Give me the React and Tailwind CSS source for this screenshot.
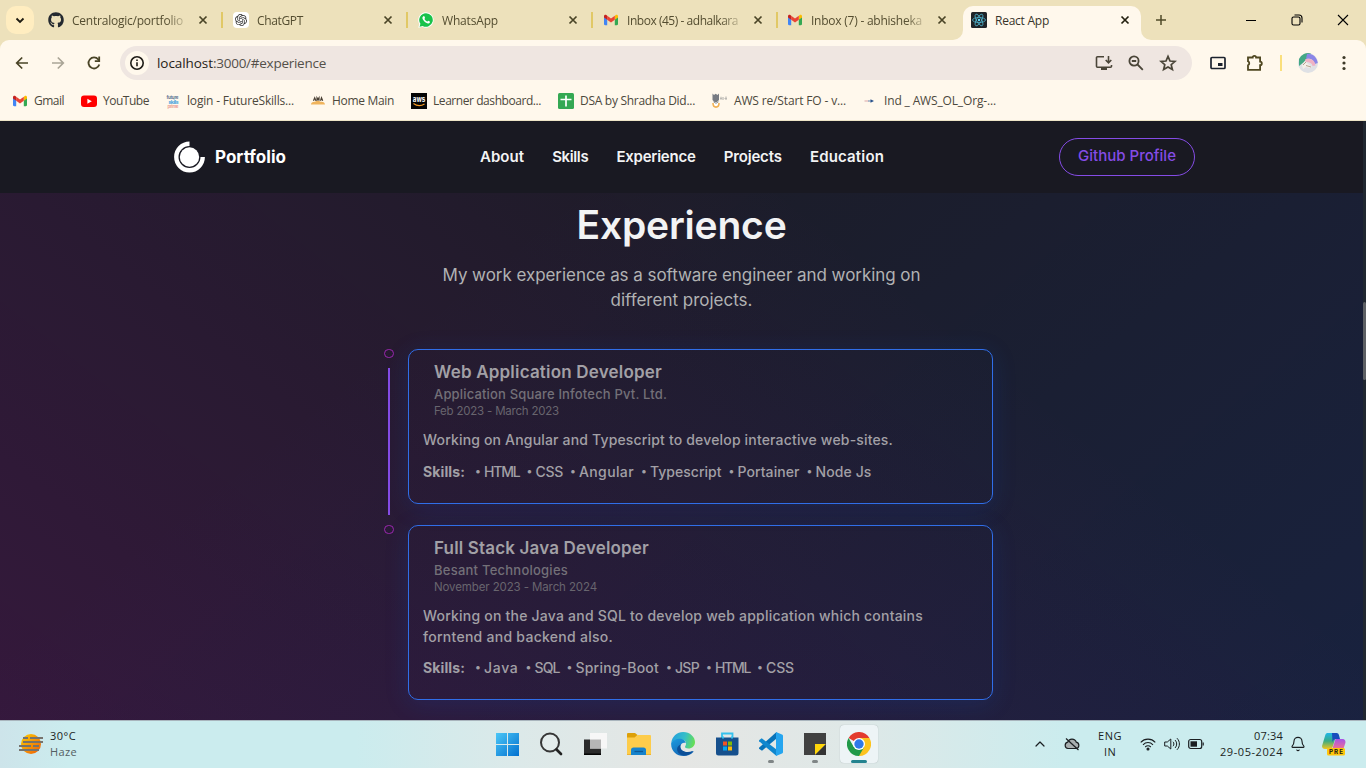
import { useLayoutEffect, useRef, useState } from "react";
import { FaGithub } from "react-icons/fa";
import { SiOpenai } from "react-icons/si";
import { Bell, ChevronUp } from "lucide-react";

const POPPINS = "font-['Inter',sans-serif]";
const SEGOE = "font-['Open_Sans','Noto_Sans',sans-serif]";

/* A run of text whose tracking is adjusted so that it spans a given width. */
function Fit({ w, className = "", children }) {
  const ref = useRef(null);
  const [tracking, setTracking] = useState(0);
  useLayoutEffect(() => {
    const natural = ref.current.getBoundingClientRect().width;
    setTracking((w - natural) / String(children).length);
  }, []);
  return (
    <span ref={ref} style={{ letterSpacing: tracking + "px" }} className={"inline-block whitespace-pre " + className}>
      {children}
    </span>
  );
}

function Gmail({ className }) {
  return (
    <svg viewBox="0 0 24 18" className={className}>
      <path d="M0 3v13c0 1 .8 2 2 2h3.500V8z" fill="#4285f4" />
      <path d="M24 3v13c0 1-.8 2-2 2h-3.500V8z" fill="#34a853" />
      <path d="M18.500 2v6.500L24 4.500V2.300C24 .2 21.600-.8 20 .4z" fill="#fbbc04" />
      <path d="M5.500 8.500V1.500L12 6.400l6.500-4.900v7L12 13.400z" fill="#ea4335" />
      <path d="M0 2.300v2.200l5.500 4V1.500L4 .4C2.400-.8 0 .2 0 2.300z" fill="#c5221f" />
    </svg>
  );
}

function ReactMark() {
  return (
    <svg viewBox="0 0 16 16" className="h-4 w-4 shrink-0">
      <rect width="16" height="16" rx="1.500" fill="#202428" />
      <g fill="none" stroke="#4fb3cb" strokeWidth="0.8">
        <ellipse cx="8" cy="8" rx="6.500" ry="2.500" />
        <ellipse cx="8" cy="8" rx="6.500" ry="2.500" transform="rotate(60 8 8)" />
        <ellipse cx="8" cy="8" rx="6.500" ry="2.500" transform="rotate(120 8 8)" />
      </g>
      <circle cx="8" cy="8" r="1.200" fill="#61dafb" />
    </svg>
  );
}

function Close({ dark }) {
  return (
    <svg viewBox="0 0 16 16" className="h-4 w-4 shrink-0" fill="none" stroke={dark ? "#23200f" : "#4a4426"} strokeWidth="1.700">
      <path d="M4.500 4.500l7 7M11.500 4.500l-7 7" />
    </svg>
  );
}

const tabs = [
  { title: "Centralogic/portfolio", w: 111, icon: <FaGithub className="h-4 w-4 shrink-0 text-[#24292f]" /> },
  {
    title: "ChatGPT",
    w: 46,
    icon: (
      <span className="flex h-4 w-4 shrink-0 items-center justify-center rounded-sm bg-white">
        <SiOpenai className="h-3 w-3 text-[#333]" />
      </span>
    ),
  },
  {
    title: "WhatsApp",
    w: 56,
    icon: (
      <svg viewBox="0 0 16 16" className="h-4 w-4 shrink-0">
        <path d="M8 .3a7.700 7.700 0 1 1-3.700 14.500L.3 15.700l1-3.800A7.700 7.700 0 0 1 8 .3z" fill="#fff" />
        <path d="M8 1.200a6.800 6.800 0 1 1-3.400 12.700l-3 .8.800-2.900A6.800 6.800 0 0 1 8 1.200z" fill="#19c24a" />
        <path d="M5.500 4.200c.5-.3.900 0 1.100.6l.4 1c.1.400-.6.900-.5 1.200.5 1.100 1.500 2 2.600 2.500.4.100.8-.9 1.200-.8l1.500.7c.4.300 0 1.500-.8 1.800-1.300.6-3.300-.4-4.600-1.700C5 8 4.100 6.500 4.500 5.300c.2-.5.500-.9 1-1.100z" fill="#fff" />
      </svg>
    ),
  },
  { title: "Inbox (45) - adhalkara", w: 111, icon: <Gmail className="h-4 w-4 shrink-0 px-px" /> },
  { title: "Inbox (7) - abhisheka", w: 111, icon: <Gmail className="h-4 w-4 shrink-0 px-px" /> },
];

function TabStrip() {
  return (
    <div className="flex h-10 items-center bg-[#ede1bb] pl-1.5">
      <div className="mr-1.5 flex h-7 w-7 shrink-0 items-center justify-center rounded-[10px] bg-[#ffedc0]">
        <svg viewBox="0 0 12 12" className="h-3 w-3" fill="none" stroke="#1e1b10" strokeWidth="1.800">
          <path d="M2.500 4.500L6 8l3.500-3.500" />
        </svg>
      </div>
      {tabs.map((t, i) => (
        <div key={t.title} className={"flex h-10 shrink-0 items-center pl-2 " + (i < 3 ? "w-[185px]" : "w-[184px]")}>
          {t.icon}
          <div className="ml-2 w-28 overflow-hidden pt-px text-[12px] leading-5 text-[#544d30] [mask-image:linear-gradient(90deg,#000_84%,rgba(0,0,0,0.25))]">
            <Fit w={t.w}>{t.title}</Fit>
          </div>
          <div className="ml-[11px] flex">
            <Close />
          </div>
          {i < 4 && <div className="ml-2.5 h-4 w-0.5 bg-[#e1c865]" />}
        </div>
      ))}
      <div className="relative flex h-[34px] w-[178px] shrink-0 items-center self-end rounded-t-[10px] bg-[#fff8ec] px-2 pb-[6px]">
        <div className="absolute -left-2.5 bottom-0 h-2.5 w-2.5 bg-[#fff8ec]">
          <div className="h-full w-full rounded-br-[10px] bg-[#ede1bb]" />
        </div>
        <div className="absolute -right-2.5 bottom-0 h-2.5 w-2.5 bg-[#fff8ec]">
          <div className="h-full w-full rounded-bl-[10px] bg-[#ede1bb]" />
        </div>
        <ReactMark />
        <div className="ml-2 flex-1 pt-px text-[12px] leading-5 text-[#38342a]">
          <Fit w={54}>React App</Fit>
        </div>
        <Close dark />
      </div>
      <svg viewBox="0 0 12 12" className="ml-3.5 h-3 w-3" fill="none" stroke="#4f4929" strokeWidth="1.500">
        <path d="M6 1v10M1 6h10" />
      </svg>
      <div className="ml-auto flex items-center gap-[34px] pr-[17px] text-black">
        <svg viewBox="0 0 12 12" className="h-3 w-3" fill="none" stroke="currentColor"><path d="M1 6.500h10" /></svg>
        <svg viewBox="0 0 12 12" className="h-3 w-3" fill="none" stroke="currentColor" strokeWidth="1.100">
          <rect x="1" y="3" width="8" height="8" rx="1.500" />
          <path d="M3.500 1h4.500a3 3 0 0 1 3 3v4.500" />
        </svg>
        <svg viewBox="0 0 12 12" className="h-3 w-3" fill="none" stroke="currentColor" strokeWidth="1.100"><path d="M1 1l10 10M11 1L1 11" /></svg>
      </div>
    </div>
  );
}

function AddressBar() {
  return (
    <div className="bg-[#ede1bb]">
      <div className="flex h-[46px] items-center rounded-t-[9px] bg-[#fff8ec] pl-[14px]">
        <svg viewBox="0 0 16 16" className="h-4 w-4" fill="none" stroke="#4a4426" strokeWidth="1.700">
          <path d="M14 8H3M8.200 2.500L2.700 8l5.500 5.500" />
        </svg>
        <svg viewBox="0 0 16 16" className="ml-5 h-4 w-4" fill="none" stroke="#aaa596" strokeWidth="1.700">
          <path d="M2 8h11M7.800 2.500L13.300 8l-5.500 5.500" />
        </svg>
        <svg viewBox="0 0 16 16" className="ml-5 h-4 w-4" fill="none" stroke="#4a4426" strokeWidth="1.800">
          <path d="M13.300 9.500A5.500 5.500 0 1 1 12.300 4.500l1 1.200" />
          <path d="M13.200 1.500v4.600H8.800" />
        </svg>
        <div className="ml-[18px] flex h-[34px] w-[1072px] shrink-0 items-center rounded-full bg-[#efe6e1] pl-[5px] pr-[15px]">
          <div className="flex h-6 w-6 items-center justify-center rounded-full bg-[#fff8ec]">
            <svg viewBox="0 0 16 16" className="h-4 w-4" fill="none" stroke="#1e1b16" strokeWidth="1.600">
              <circle cx="8" cy="8" r="6.200" />
              <path d="M8 7.200v4M8 4.500v1.600" />
            </svg>
          </div>
          <div className="ml-2 flex-1 text-[13.500px] leading-5 text-[#54504a]">
            <Fit w={56} className="text-[#1f1c17]">localhost</Fit>
            <Fit w={113}>:3000/#experience</Fit>
          </div>
          <div className="flex items-center gap-3.5 text-[#4a4538]">
            <svg viewBox="0 0 18 18" className="h-[18px] w-[18px]" fill="none" stroke="currentColor" strokeWidth="1.600">
              <path d="M9 2.800H2.500a1 1 0 0 0-1 1v8.400a1 1 0 0 0 1 1h13a1 1 0 0 0 1-1V11M13.500 2v6.500M10.700 6l2.800 2.800L16.300 6" />
              <path d="M6 14.800h6" strokeWidth="2.400" />
            </svg>
            <svg viewBox="0 0 18 18" className="h-[18px] w-[18px]" fill="none" stroke="currentColor" strokeWidth="1.800">
              <circle cx="7" cy="7" r="4.600" />
              <path d="M10.500 10.500l5.300 5.300M4.800 7h4.400" />
            </svg>
            <svg viewBox="0 0 18 18" className="h-[18px] w-[18px]" fill="none" stroke="currentColor" strokeWidth="1.700">
              <path d="M9 2.300l2 4.700 5 .4-3.800 3.300 1.200 4.900L9 13l-4.400 2.600 1.200-4.900L2 7.400l5-.4z" />
            </svg>
          </div>
        </div>
        <svg viewBox="0 0 16 14" className="ml-[18px] h-[14px] w-4" fill="none" stroke="#1c222e" strokeWidth="1.700">
          <rect x="1" y="1.500" width="14" height="11" rx="1" />
          <rect x="8" y="7" width="4.500" height="3" fill="#1c222e" stroke="none" />
        </svg>
        <svg viewBox="0 0 18 18" className="ml-5 h-[18px] w-[18px]" fill="none" stroke="#4f4721" strokeWidth="1.800">
          <path d="M2 3.500h4.700a1.700 1.700 0 0 1 3.400 0h4v4.200a1.700 1.700 0 0 1 0 3.400v4.700H2v-4.500a2.200 2.200 0 0 0 0-4z" />
        </svg>
        <div className="ml-4 h-4 w-0.5 bg-[#fadf7c]" />
        <svg viewBox="0 0 20 20" className="ml-4 h-5 w-5">
          <circle cx="10" cy="10" r="10" fill="#dfe1e5" />
          <path d="M1 6A10 10 0 0 1 13 .5L6 9l-5 4z" fill="#43a884" />
          <path d="M9 1C14 0 19 4 19.800 10l-3 1C16 7 13 5 8 6z" fill="#8b86e6" />
          <path d="M7 6.500c5-2 10 1 10.500 6l-3 .5c-.5-3-3-4-7-4z" fill="#efb2c4" />
          <path d="M4 12l3-4 3 3 4 3-3 1-3-1-3 2z" fill="#f4efe9" />
          <path d="M5 12l3-3M8 12.500l5 1.500" fill="none" stroke="#af9a84" strokeWidth="0.900" />
        </svg>
        <svg viewBox="0 0 4 16" className="ml-6 h-4 w-1" fill="#3d3927">
          <circle cx="2" cy="2.500" r="1.600" /><circle cx="2" cy="8" r="1.600" /><circle cx="2" cy="13.500" r="1.600" />
        </svg>
      </div>
    </div>
  );
}

function Tiny({ kind }) {
  if (kind === "youtube")
    return (
      <svg viewBox="0 0 16 16" className="h-4 w-4">
        <rect y="2.500" width="16" height="11.500" rx="3" fill="#f00" />
        <path d="M6.400 5.700v5L10.800 8.200z" fill="#fff" />
      </svg>
    );
  if (kind === "future")
    return (
      <svg viewBox="0 0 16 16" className="h-4 w-4 font-['Inter',sans-serif] font-bold">
        <text x="1.500" y="5.500" fontSize="4.500" textLength="12" fill="#5d7290">future</text>
        <text x="3.500" y="10.500" fontSize="5" textLength="10" fill="#3ea2dd">skills</text>
        <text x="2.500" y="15" fontSize="4.500" textLength="11" fill="#e99d93">prime</text>
      </svg>
    );
  if (kind === "home")
    return (
      <svg viewBox="0 0 16 16" className="h-4 w-4">
        <path d="M1 11.500c0-2 2-3 4-2.700 1.500-1.500 4-1.500 5.500 0C13 8.300 15 9.500 15 11.500z" fill="#f0b45c" />
        <path d="M3.500 7.800l1.200-3 1.200 3M7 7.800v-3l1 1.500 1-1.500v3M10.500 7.800l1-3 1.200 3" fill="none" stroke="#4b4135" strokeWidth="1.200" />
      </svg>
    );
  if (kind === "aws")
    return (
      <svg viewBox="0 0 16 16" className="h-4 w-4 font-['Inter',sans-serif] font-bold">
        <rect width="16" height="16" fill="#050505" />
        <text x="1.800" y="8.600" fontSize="7.500" textLength="12.500" lengthAdjust="spacingAndGlyphs" fill="#fff">aws</text>
        <path d="M2.500 10.500c3.500 2.500 8 2.300 11 .4" fill="none" stroke="#f79b23" strokeWidth="1.200" />
      </svg>
    );
  if (kind === "sheet")
    return (
      <svg viewBox="0 0 16 16" className="h-4 w-4">
        <rect width="16" height="16" rx="1.500" fill="#34a853" />
        <path d="M8 2.500v11M2.500 6.500h11" stroke="#fff" strokeWidth="1.700" />
      </svg>
    );
  if (kind === "canvas")
    return (
      <svg viewBox="0 0 16 16" className="h-4 w-4">
        <path d="M.5.5L2 2l1.700-1.300L5.500 2 7 .5v6.500L5 9H2.500L.5 7z" fill="#777b82" />
        <path d="M8 5.500h2M11 4v3M12.500 5.500H15M9 3.800v3M14 3.500v3.500" stroke="#bbb9b4" strokeWidth="1.200" />
        <path d="M1 10c0 5.500 6 5.500 6 0" fill="#fff" stroke="#f1b155" strokeWidth="1.600" />
        <path d="M1.500 8.800l2.500 1.500 2.500-1.500" stroke="#87929d" fill="none" />
      </svg>
    );
  if (kind === "arrow")
    return (
      <svg viewBox="0 0 16 16" className="h-4 w-4">
        <path d="M2.500 8h4" stroke="#d8a6a9" /><path d="M6 8h4" stroke="#668cb5" /><path d="M8.500 6.200L12 8 8.500 9.800z" fill="#28518b" />
      </svg>
    );
  return <Gmail className="h-4 w-4 px-px" />;
}

const bookmarks = [
  ["gmail", "Gmail", 30, "ml-3"],
  ["youtube", "YouTube", 46, "ml-[17px]"],
  ["future", "login - FutureSkills...", 107, "ml-4"],
  ["home", "Home Main", 62, "ml-4"],
  ["aws", "Learner dashboard...", 108, "ml-[17px]"],
  ["sheet", "DSA by Shradha Did...", 115, "ml-[17px]"],
  ["canvas", "AWS re/Start FO - v...", 112, "ml-[17px]"],
  ["arrow", "Ind _ AWS_OL_Org-...", 112, "ml-4"],
];

function Bookmarks() {
  return (
    <div className="flex h-[34px] items-center bg-[#fff8ec] pt-px pb-1.5 text-[12px] leading-4 text-[#4c483c]">
      {bookmarks.map(([k, label, w, ml]) => (
        <div key={k} className={"flex items-center gap-1.5 " + ml}>
          <Tiny kind={k} />
          <Fit w={w}>{label}</Fit>
        </div>
      ))}
    </div>
  );
}

function Nav() {
  return (
    <nav className="flex h-[72px] items-center bg-[#191922] pl-[174px] text-white">
      <svg viewBox="0 0 32 32" className="h-8 w-8">
        <circle cx="15.500" cy="16" r="9.700" fill="#fff" />
        <path d="M15.500 2.800A13.200 13.200 0 1 0 28.700 16" fill="none" stroke="#fff" strokeWidth="4.400" />
      </svg>
      <Fit w={71} className="ml-[9px] text-[17px] font-bold leading-6">Portfolio</Fit>
      <div className="ml-[194px] flex w-[404px] justify-between text-[15px] font-semibold leading-6 text-[#f2f3f4]">
        <Fit w={44}>About</Fit>
        <Fit w={36}>Skills</Fit>
        <Fit w={79}>Experience</Fit>
        <Fit w={58}>Projects</Fit>
        <Fit w={74}>Education</Fit>
      </div>
      <div className="ml-[175px] flex h-[38px] w-[136px] items-center justify-center rounded-[20px] border border-[#854ce6] pb-0.5 text-[15px] font-medium leading-6 text-[#854ce6]">
        <Fit w={98}>Github Profile</Fit>
      </div>
    </nav>
  );
}

const jobs = [
  {
    role: ["Web Application Developer", 228],
    company: ["Application Square Infotech Pvt. Ltd.", 233],
    date: ["Feb 2023 - March 2023", 125],
    desc: [["Working on Angular and Typescript to develop interactive web-sites.", 470]],
    skills: [["HTML", 35.5], ["CSS", 27.5], ["Angular", 55], ["Typescript", 71.5], ["Portainer", 62], ["Node Js", 56]],
  },
  {
    role: ["Full Stack Java Developer", 215],
    company: ["Besant Technologies", 134],
    date: ["November 2023 - March 2024", 163],
    desc: [
      ["Working on the Java and SQL to develop web application which contains", 500],
      ["forntend and backend also.", 190],
    ],
    skills: [["Java", 34.5], ["SQL", 25], ["Spring-Boot", 83.5], ["JSP", 24], ["HTML", 35], ["CSS", 28]],
  },
];

function Job({ job, last }) {
  return (
    <div className="flex items-start">
      <div className="flex w-6 shrink-0 flex-col items-start">
        <div className="h-[9px] w-[10px] rounded-full border border-[#9c27b0]" />
        {!last && <div className="ml-1 mt-2.5 h-[147px] w-0.5 bg-[#854ce6]" />}
      </div>
      <div className={"w-[585px] rounded-[10px] border border-[#306ee8] pl-[14px] text-[#a2a0a6] shadow-[0_4px_24px_rgba(23,92,230,0.15)] " + (last ? "h-[175px]" : "h-[155px]")}>
        <div className="flex flex-col items-start pl-[11px] pt-[10px]">
          <Fit w={job.role[1]} className="text-[17px] font-semibold leading-6">{job.role[0]}</Fit>
          <Fit w={job.company[1]} className="text-[13px] font-medium leading-5 text-[#737078]">{job.company[0]}</Fit>
          <Fit w={job.date[1]} className="-mt-px text-[11.500px] leading-4 text-[#68656e]">{job.date[0]}</Fit>
        </div>
        <div className="mt-[10px] flex flex-col items-start text-[14px] font-medium leading-[21px]">
          {job.desc.map(([t, w]) => <Fit key={t} w={w}>{t}</Fit>)}
        </div>
        <div className={"flex text-[14px] font-medium leading-[21px] " + (last ? "mt-[10px]" : "mt-[11px]")}>
          <Fit w={42} className="mr-2.5 font-bold">Skills:</Fit>
          <div className="flex gap-[7px]">
            {job.skills.map(([t, w]) => (
              <div key={t} className="flex">
                <span className="w-[9px] text-[11px]">•</span>
                <Fit w={w}>{t}</Fit>
              </div>
            ))}
          </div>
        </div>
      </div>
    </div>
  );
}

function Page() {
  return (
    <div className={"flex h-[599px] " + POPPINS}>
      <div className="flex w-[1363px] flex-col bg-[#1c1c27] bg-[linear-gradient(38.73deg,rgba(204,0,187,0.15)_0%,rgba(201,32,184,0)_50%),linear-gradient(141.27deg,rgba(0,70,209,0)_50%,rgba(0,70,209,0.15)_100%)] bg-[length:1363px_1400px] bg-[position:0_-721px]">
        <Nav />
        <div className="flex flex-col items-center pt-2">
          <h2 className="text-[39px] font-semibold leading-[48px] text-[#f2f3f4]"><Fit w={210}>Experience</Fit></h2>
          <div className="mt-[14px] flex flex-col items-center text-[17px] leading-[25px] text-[#b1b2b3]">
            <Fit w={478}>My work experience as a software engineer and working on</Fit>
            <Fit w={142}>different projects.</Fit>
          </div>
        </div>
        <div className="mt-9 flex flex-col gap-2.5 pl-[384px]">
          <Job job={jobs[0]} />
          <Job job={jobs[1]} last />
        </div>
      </div>
      <div className="w-[3px] bg-[#202730] pt-[181px]">
        <div className="h-[78px] rounded-sm bg-[#5d6064]" />
      </div>
    </div>
  );
}

function TaskIcon({ children }) {
  return <svg viewBox="0 0 24 24" className="h-6 w-6">{children}</svg>;
}

function Taskbar() {
  return (
    <div className="flex h-12 items-center border-t border-[#a9b5bd] bg-[linear-gradient(90deg,#cde4ea_0%,#cbecee_5%,#cbecee_26%,#dce9e9_38%,#e5e6e4_50%,#dfe8e7_62%,#cbecee_78%,#cbecee_100%)] text-[11px] leading-4 text-[#1b1f22]">
      <div className="flex w-[488px] items-center pb-0.5 pl-[19px]">
        <svg viewBox="0 0 24 24" className="h-6 w-6">
          <defs><linearGradient id="sun" x1="0" y1="0" x2="1" y2="1"><stop stopColor="#ffd000" /><stop offset="1" stopColor="#ee5a08" /></linearGradient></defs>
          <circle cx="12" cy="12" r="10" fill="url(#sun)" />
          <path d="M4 6h5M11 6h13M4 10h20M0 14h12M14 14h6M0 18h20" stroke="#77736d" strokeWidth="2" />
        </svg>
        <div className="ml-[7px] flex flex-col items-start">
          <Fit w={26}>30°C</Fit>
          <Fit w={27} className="text-[#545e62]">Haze</Fit>
        </div>
      </div>
      <div className="flex items-center gap-1.5 pb-0.5">
        <div className="flex h-[38px] w-[38px] items-center justify-center">
          <TaskIcon>
            <defs><linearGradient id="win" x1="0" y1="0" x2="1" y2="1"><stop stopColor="#4cc7f7" /><stop offset="1" stopColor="#0270cf" /></linearGradient></defs>
            <path d="M1 1h11v11H1zM13 1h11v11H13zM1 13h11v11H1zM13 13h11v11H13z" fill="url(#win)" />
          </TaskIcon>
        </div>
        <div className="flex h-[38px] w-[38px] items-center justify-center">
          <TaskIcon>
            <circle cx="11" cy="10.500" r="9" fill="rgba(255,255,255,.2)" stroke="#363636" strokeWidth="2" />
            <path d="M17.500 17.500l4.500 4.500" stroke="#222" strokeWidth="2.700" strokeLinecap="round" />
          </TaskIcon>
        </div>
        <div className="flex h-[38px] w-[38px] items-center justify-center">
          <TaskIcon>
            <path d="M1 7.500h17V23H1z" fill="#2b2b2b" /><path d="M1 21.500h17V23H1z" fill="#050505" />
            <path d="M7 1h17v15.500H7z" fill="#f7f7f7" /><path d="M7 7.500h11v9H7z" fill="#b6b6b6" />
          </TaskIcon>
        </div>
        <div className="flex h-[38px] w-[38px] items-center justify-center">
          <TaskIcon>
            <path d="M0 2a1 1 0 0 1 1-1h7l2.500 2-2.500 3H0z" fill="#dda009" />
            <path d="M0 5.500h7.500L10.500 3H23a1 1 0 0 1 1 1v18a1 1 0 0 1-1 1H1a1 1 0 0 1-1-1z" fill="#fdcc4b" />
            <path d="M4 23v-5a2.500 2.500 0 0 1 2.500-2.500h10A2.500 2.500 0 0 1 19 18v5z" fill="#1683cc" /><path d="M7.500 19.500h8.500" stroke="#0d5896" strokeWidth="1.300" />
            <path d="M0 22.500h4m15 0h5" stroke="#edb332" />
          </TaskIcon>
        </div>
        <div className="flex h-[38px] w-[38px] items-center justify-center">
          <TaskIcon>
            <defs>
              <linearGradient id="edgeA" x1="0" x2="1" y1="0.300" y2="0.500"><stop stopColor="#249fde" /><stop offset="0.550" stopColor="#35bec8" /><stop offset="1" stopColor="#67df54" /></linearGradient>
              <linearGradient id="edgeB" x1="0" x2="0.600" y1="0" y2="1"><stop stopColor="#1b9be0" /><stop offset="1" stopColor="#1163b3" /></linearGradient>
            </defs>
            <path d="M.2 11C1 4.500 6 0 12.200 0 19 0 24 5 24 10c0 4-3 6.500-6.500 6.500-3 0-4-1.300-3.300-2.300 2.300-3.500-.3-6.700-4-6.700C5.500 7.500 2 9 .2 11z" fill="url(#edgeA)" />
            <path d="M.2 11C1.600 8.500 5 6.700 8.700 6.700c3.300 0 5.800 1.800 6 4.500-1.500-1-4.500-.5-5.200 2.600-.9 4.700 5.800 8.700 12 5.400.8-.4 1.200.2.800.7C20 22.500 16.300 24 12.500 24 5.500 24-.5 18.500.2 11z" fill="url(#edgeB)" />
            <path d="M9.800 12.500c-2.500 4.800 3.500 9.500 12 6.500-3 4.500-9.500 5.700-13 3-4-3-3.500-8 1-9.500z" fill="#0c4f98" />
          </TaskIcon>
        </div>
        <div className="flex h-[38px] w-[38px] items-center justify-center">
          <TaskIcon>
            <path d="M7 6V1.500h10.500V6" fill="none" stroke="#35c1ed" strokeWidth="1.800" />
            <path d="M1 5.500h22.500V21a2.500 2.500 0 0 1-2.500 2.500H3.500A2.500 2.500 0 0 1 1 21z" fill="#16508d" />
            <path d="M7 5.500h2M16 5.500h2" stroke="#35c1ed" strokeWidth="2" />
            <path d="M8 9.500h4v4H8z" fill="#f35325" /><path d="M13 9.500h4v4h-4z" fill="#81bc06" /><path d="M8 14.500h4v4H8z" fill="#05a6f0" /><path d="M13 14.500h4v4h-4z" fill="#ffba08" />
          </TaskIcon>
        </div>
        <div className="relative flex h-[38px] w-[38px] items-center justify-center">
          <TaskIcon>
            <path d="M17.500 0v6.500L3 18.800 0 16.700v-1L17.500 0z" fill="#0873b9" />
            <path d="M0 8.300l2.700-2L17.500 17.500V24L.2 9.300z" fill="#1087ce" />
            <path d="M17 0l6 2.500a1.500 1.500 0 0 1 1 1.500v16a1.500 1.500 0 0 1-1 1.500L17 24z" fill="#25a5ef" />
          </TaskIcon>
          <div className="absolute bottom-0 left-4 h-[3px] w-1.5 rounded-full bg-[#7f8586]" />
        </div>
        <div className="relative flex h-[38px] w-[38px] items-center justify-center">
          <TaskIcon>
            <path d="M1 1h22v11L12 23H1z" fill="#414141" /><path d="M12 23V12h11z" fill="#ffd60a" /><path d="M23 12v11H12z" fill="#333" />
          </TaskIcon>
          <div className="absolute bottom-0 left-4 h-[3px] w-1.5 rounded-full bg-[#7f8586]" />
        </div>
        <div className="relative flex h-[38px] w-[38px] items-center justify-center rounded bg-[#edf4f6] shadow-[0_0_1px_#9aa7aa]">
          <TaskIcon>
            <path d="M12 12L1.600 6A12 12 0 0 1 22.400 6z" fill="#e33b2e" />
            <path d="M12 12V6h10.400A12 12 0 0 1 12 24l-1-.1 6-9.500z" fill="#fcc31e" />
            <path d="M1.600 6A12 12 0 0 0 12 24l5.200-9H12L6.800 15z" fill="#219a49" />
            <circle cx="12" cy="12" r="6" fill="#fff" /><circle cx="12" cy="12" r="4.700" fill="#2f79e8" />
          </TaskIcon>
          <div className="absolute bottom-0 left-[11px] h-[3px] w-4 rounded-full bg-[#23838f]" />
        </div>
      </div>
      <div className="ml-auto flex items-center pb-px pr-5">
        <ChevronUp className="h-4 w-4" strokeWidth={1.800} />
        <svg viewBox="0 0 16 14" className="ml-4 h-[14px] w-4" fill="#a8afb0" stroke="#1b1f22" strokeWidth="1.200">
          <path d="M4 11.500a3.200 3.200 0 0 1-.3-6.300 4.500 4.500 0 0 1 8.600 0 3.200 3.200 0 0 1-.2 6.300z" /><path d="M2 1.500L14.500 13" fill="none" />
        </svg>
        <div className="ml-[17px] flex w-[26px] flex-col items-center">
          <Fit w={24}>ENG</Fit>
          <Fit w={12}>IN</Fit>
        </div>
        <svg viewBox="0 0 16 14" className="ml-[17px] h-[14px] w-4" fill="none" stroke="#1b1f22" strokeWidth="1.100">
          <path d="M.7 5.300c4-4.300 10.600-4.300 14.600 0M3 7.800c2.800-3 7.200-3 10 0M5.200 10c1.600-1.700 4-1.700 5.600 0" /><circle cx="8" cy="12" r="1" fill="#1b1f22" />
        </svg>
        <svg viewBox="0 0 16 14" className="ml-2 h-[14px] w-4" fill="none" stroke="#1b1f22" strokeWidth="1">
          <path d="M.7 5v4h2.600L6.800 12V2L3.300 5zM9 4.800c1.200 1.300 1.200 3.100 0 4.400M11 3c2.200 2.300 2.200 5.700 0 8M13 1.200c3.200 3.400 3.200 8.200 0 11.600" />
        </svg>
        <svg viewBox="0 0 16 12" className="ml-2 h-3 w-4" fill="none" stroke="#1b1f22" strokeWidth="1.200">
          <rect x="0.700" y="1.500" width="13" height="9" rx="2" /><rect x="2.500" y="3.300" width="6.500" height="5.400" fill="#1b1f22" stroke="none" /><path d="M15.200 4.500v3" />
        </svg>
        <div className="ml-4 flex w-[63px] flex-col items-end">
          <Fit w={29}>07:34</Fit>
          <Fit w={63}>29-05-2024</Fit>
        </div>
        <Bell className="ml-[7px] h-4 w-4" strokeWidth={1.700} />
        <svg viewBox="0 0 24 24" className="ml-4 h-6 w-6 font-['Inter',sans-serif] font-bold">
          <defs>
            <linearGradient id="cpA" x1="0" y1="0" x2="0" y2="1"><stop stopColor="#20b6e8" /><stop offset="0.500" stopColor="#3aab84" /><stop offset="1" stopColor="#f2c51e" /></linearGradient>
            <linearGradient id="cpB" x1="0" y1="0" x2="0" y2="1"><stop stopColor="#a653e7" /><stop offset="1" stopColor="#f77588" /></linearGradient>
          </defs>
          <path d="M5 1h10l-4 13c-.5 2-2 3-4 3H3c-2.500 0-3.500-2-2.700-4L3 4c.4-1.700 1-2.500 2-3z" fill="url(#cpA)" />
          <path d="M10 1h4.500c1.500 0 2 .8 2.500 2.300L18 7h-4c-2 0-2.800 1-3.500 3z" fill="#184dbd" />
          <path d="M13.500 7H20c3 0 4 2 3.200 4.500L21 18H10z" fill="url(#cpB)" />
          <rect x="5" y="16" width="18" height="7.500" rx="1.500" fill="#ffc60a" />
          <text x="7" y="22" fontSize="6.200" textLength="14" fill="#171717">PRE</text>
        </svg>
      </div>
    </div>
  );
}

export default function App() {
  return (
    <div className={"flex h-[768px] w-[1366px] flex-col overflow-hidden " + SEGOE}>
      <TabStrip />
      <AddressBar />
      <Bookmarks />
      <div className="h-px bg-[#ede4c8]" />
      <Page />
      <Taskbar />
    </div>
  );
}
